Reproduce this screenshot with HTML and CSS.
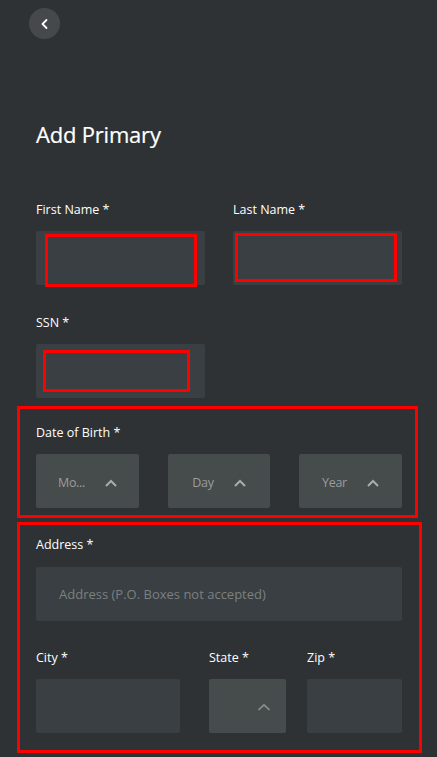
FILE: index.html
```html
<!DOCTYPE html>
<html lang="en">
<head>
<meta charset="utf-8">
<title>Add Primary</title>
<link rel="stylesheet" href="styles.css">
</head>
<body>
<div class="page">
  <button class="back" aria-label="Back">
    <svg width="10" height="12" viewBox="0 0 10 12"><path d="M6.5 2 L2.5 6 L6.5 10" fill="none" stroke="#fff" stroke-width="1.8" stroke-linecap="round" stroke-linejoin="round"/></svg>
  </button>

  <h1 class="title">Add Primary</h1>

  <div class="row two">
    <div class="field">
      <label class="label">First Name *</label>
      <div class="box">
        <span class="flag flag-first"></span>
      </div>
    </div>
    <div class="field">
      <label class="label">Last Name *</label>
      <div class="box">
        <span class="flag flag-last"></span>
      </div>
    </div>
  </div>

  <div class="row two ssn-row">
    <div class="field">
      <label class="label">SSN *</label>
      <div class="box">
        <span class="flag flag-ssn"></span>
      </div>
    </div>
  </div>

  <section class="group dob">
    <label class="label">Date of Birth *</label>
    <div class="selects">
      <div class="select"><span class="sel-text">Mo...</span><svg class="chev" width="12" height="8" viewBox="0 0 12 8"><path d="M1 7 L6 2 L11 7" fill="none" stroke="#a9acad" stroke-width="2"/></svg></div>
      <div class="select"><span class="sel-text">Day</span><svg class="chev" width="12" height="8" viewBox="0 0 12 8"><path d="M1 7 L6 2 L11 7" fill="none" stroke="#a9acad" stroke-width="2"/></svg></div>
      <div class="select"><span class="sel-text">Year</span><svg class="chev" width="12" height="8" viewBox="0 0 12 8"><path d="M1 7 L6 2 L11 7" fill="none" stroke="#a9acad" stroke-width="2"/></svg></div>
    </div>
  </section>

  <section class="group addr">
    <label class="label">Address *</label>
    <div class="box address">Address (P.O. Boxes not accepted)</div>
    <div class="csz">
      <div class="field city">
        <label class="label">City *</label>
        <div class="box"></div>
      </div>
      <div class="field state-field">
        <label class="label">State *</label>
        <div class="select state"><svg class="chev" width="14" height="8" viewBox="0 0 14 8"><path d="M1.5 7 L7 1.8 L12.5 7" fill="none" stroke="#8e9293" stroke-width="1.6"/></svg></div>
      </div>
      <div class="field zip">
        <label class="label">Zip *</label>
        <div class="box"></div>
      </div>
    </div>
  </section>
</div>
</body>
</html>
```
FILE: styles.css
```css
* { box-sizing: border-box; }
html, body {
  margin: 0;
  background: #2e3235;
}
body {
  font-family: "Open Sans", "Noto Sans", sans-serif;
  color: #ffffff;
}
.page {
  padding-top: 8px;
  height: 757px;
  overflow: hidden;
}
.back {
  display: flex;
  align-items: center;
  justify-content: center;
  width: 31px;
  height: 31px;
  margin: 0 0 0 29px;
  padding: 0;
  border: 0;
  border-radius: 50%;
  background: #45494b;
}
.title {
  margin: 80px 0 0 36px;
  font-size: 22px;
  line-height: 30px;
  font-weight: 400;
  letter-spacing: -0.2px;
  -webkit-text-stroke: 0.2px #ffffff;
}
.label {
  display: block;
  font-size: 12.5px;
  line-height: 20px;
  color: #ffffff;
  margin-top: 1px;
}
.row {
  display: grid;
  grid-template-columns: 169px 169px;
  column-gap: 28px;
  margin-left: 36px;
}
.row.two { margin-top: 50px; }
.row.ssn-row { margin-top: 27px; }
.field {
  display: flex;
  flex-direction: column;
  gap: 11px;
}
.box {
  position: relative;
  height: 54px;
  background: #393f42;
  border-radius: 2px;
}
.flag {
  position: absolute;
  border: 3px solid #ff0000;
}
.flag-first { left: 9px; top: 3px; width: 152px; height: 53px; }
.flag-last { left: 2px; top: 2px; width: 162px; height: 49px; }
.flag-ssn { left: 7px; top: 6px; width: 147px; height: 42px; }

.group {
  border: 3px solid #ff0000;
  margin-left: 17px;
  padding-left: 16px;
}
.dob {
  margin-top: 8px;
  width: 401px;
  padding-top: 13px;
  padding-bottom: 7px;
}
.selects {
  display: grid;
  grid-template-columns: 103px 102px 103px;
  column-gap: 29px;
  margin-top: 11px;
}
.select {
  display: flex;
  align-items: center;
  justify-content: center;
  gap: 20px;
  height: 54px;
  padding-top: 3px;
  background: #464b4c;
  border-radius: 2px;
}
.sel-text {
  font-size: 12.5px;
  letter-spacing: -0.3px;
  color: #9a9d9e;
}
.chev { display: block; }
.addr {
  margin-top: 4px;
  width: 405px;
  padding-top: 9px;
  padding-bottom: 17px;
}
.box.address {
  width: 366px;
  margin-top: 12px;
  display: flex;
  align-items: center;
  padding-left: 23px;
  font-size: 13px;
  color: #7c8081;
}
.csz {
  display: flex;
  margin-top: 26px;
}
.csz .city { width: 144px; }
.csz .state-field { width: 77px; margin-left: 29px; }
.csz .zip { width: 95px; margin-left: 21px; }
.select.state {
  justify-content: flex-end;
  padding-right: 15px;
  padding-top: 2px;
}
```
